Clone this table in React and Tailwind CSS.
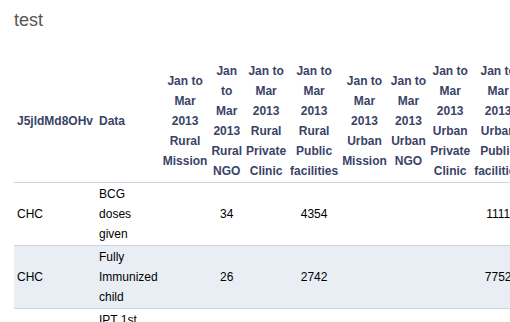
const columns = [
  { label: "Jan to Mar 2013 Rural Mission" },
  { label: "Jan to Mar 2013 Rural NGO" },
  { label: "Jan to Mar 2013 Rural Private Clinic" },
  { label: "Jan to Mar 2013 Rural Public facilities" },
  { label: "Jan to Mar 2013 Urban Mission" },
  { label: "Jan to Mar 2013 Urban NGO", keepFirst: true },
  { label: "Jan to Mar 2013 Urban Private Clinic" },
  { label: "Jan to Mar 2013 Urban Public facilities" },
];

const rows = [
  { org: "CHC", data: "BCG doses given", values: ["", "34", "", "4354", "", "", "", "1111"] },
  { org: "CHC", data: "Fully Immunized child", values: ["", "26", "", "2742", "", "", "", "7752"] },
  { org: "CHC", data: "IPT 1st dose given", values: ["", "", "", "", "", "", "", ""] },
];

export default function App() {
  return (
    <div className="w-[510px] h-[322px] overflow-hidden bg-white font-['Liberation_Sans',Arial,sans-serif]">
      <h1 className="pl-[14px] pt-[10px] text-[18px] leading-[20px] text-[#555]">test</h1>
      <table className="ml-[14px] mt-[30px] border-collapse text-[12px] leading-[20px]">
        <thead>
          <tr className="border-b border-[#c9d3e1]">
            <th className="px-[3px] py-[1px] text-left align-middle font-bold text-[#3a4366]">J5jldMd8OHv</th>
            <th className="px-[3px] py-[1px] text-left align-middle font-bold text-[#3a4366]">Data</th>
            {columns.map((c) => (
              <th key={c.label} className="px-[2px] py-[1px] text-center align-middle font-bold text-[#3a4366]">
                {c.keepFirst ? (
                  <>
                    <span className="whitespace-nowrap">Jan to</span> {c.label.slice(7)}
                  </>
                ) : (
                  c.label
                )}
              </th>
            ))}
          </tr>
        </thead>
        <tbody className="text-black">
          {rows.map((r, i) => (
            <tr key={r.data} className={`border-b border-[#c9d3e1] ${i % 2 === 1 ? "bg-[#e9eef5]" : ""}`}>
              <td className="px-[3px] py-[1px] align-middle">{r.org}</td>
              <td className="px-[3px] py-[1px] align-middle">{r.data}</td>
              {r.values.map((v, j) => (
                <td key={j} className="px-[2px] py-[1px] text-center align-middle">
                  {v}
                </td>
              ))}
            </tr>
          ))}
        </tbody>
      </table>
    </div>
  );
}
